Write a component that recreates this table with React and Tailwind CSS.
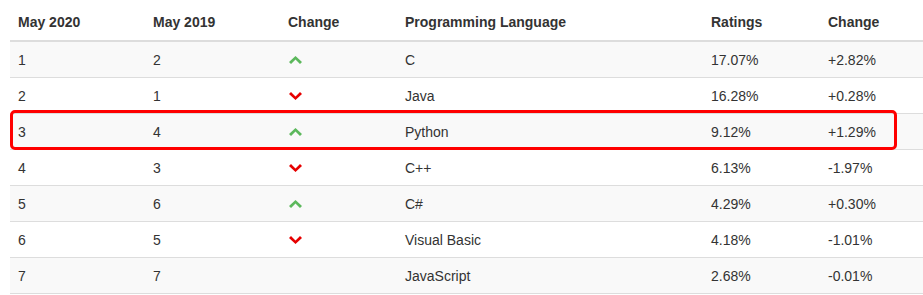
const rows = [
  { now: '1', prev: '2', dir: 'up', lang: 'C', rating: '17.07%', change: '+2.82%' },
  { now: '2', prev: '1', dir: 'down', lang: 'Java', rating: '16.28%', change: '+0.28%' },
  { now: '3', prev: '4', dir: 'up', lang: 'Python', rating: '9.12%', change: '+1.29%' },
  { now: '4', prev: '3', dir: 'down', lang: 'C++', rating: '6.13%', change: '-1.97%' },
  { now: '5', prev: '6', dir: 'up', lang: 'C#', rating: '4.29%', change: '+0.30%' },
  { now: '6', prev: '5', dir: 'down', lang: 'Visual Basic', rating: '4.18%', change: '-1.01%' },
  { now: '7', prev: '7', dir: null, lang: 'JavaScript', rating: '2.68%', change: '-0.01%' },
]

// chunky chevron, like the font-awesome one on the page
function Chevron({ dir }) {
  if (!dir) return null
  const up = dir === 'up'
  return (
    <svg width="13" height="8" viewBox="0 0 13 8" className="block">
      <polygon
        points={
          up
            ? '6.5,0 13,6 11,8 6.5,3.6 2,8 0,6'
            : '6.5,8 13,2 11,0 6.5,4.4 2,0 0,2'
        }
        fill={up ? '#5cb85c' : '#e60000'}
      />
    </svg>
  )
}

const headers = ['May 2020', 'May 2019', 'Change', 'Programming Language', 'Ratings', 'Change']

export default function App() {
  return (
    <div className="h-[295px] w-[923px] overflow-hidden bg-white pl-[10px] font-['Liberation_Sans',Arial,sans-serif] text-[14px] text-[#333]">
      <div className="relative">
        <table className="w-[913px] table-fixed border-separate border-spacing-0">
          <colgroup>
            <col className="w-[135px]" />
            <col className="w-[135px]" />
            <col className="w-[117px]" />
            <col className="w-[306px]" />
            <col className="w-[117px]" />
            <col />
          </colgroup>
          <thead>
            <tr className="text-left">
              {headers.map((h, i) => (
                <th
                  key={i}
                  className="h-[42px] border-b-2 border-[#ddd] px-2 pt-[4px] pb-0 align-middle font-bold leading-5"
                >
                  {h}
                </th>
              ))}
            </tr>
          </thead>
          <tbody>
            {rows.map((r, i) => (
              <tr key={r.now} className={i % 2 === 0 ? 'bg-[#f9f9f9]' : 'bg-white'}>
                <td className="h-[36px] border-b border-[#ddd] px-2 align-middle leading-5">{r.now}</td>
                <td className="border-b border-[#ddd] px-2 align-middle leading-5">{r.prev}</td>
                <td className="border-b border-[#ddd] pl-[9px] pr-2 align-middle leading-5">
                  <Chevron dir={r.dir} />
                </td>
                <td className="border-b border-[#ddd] px-2 align-middle leading-5">{r.lang}</td>
                <td className="border-b border-[#ddd] px-2 align-middle leading-5">{r.rating}</td>
                <td className="border-b border-[#ddd] px-2 align-middle leading-5">{r.change}</td>
              </tr>
            ))}
          </tbody>
        </table>
        <div className="pointer-events-none absolute left-0 top-[110px] h-[40px] w-[887px] rounded-[5px] border-[3px] border-[#f00]" />
      </div>
    </div>
  )
}
